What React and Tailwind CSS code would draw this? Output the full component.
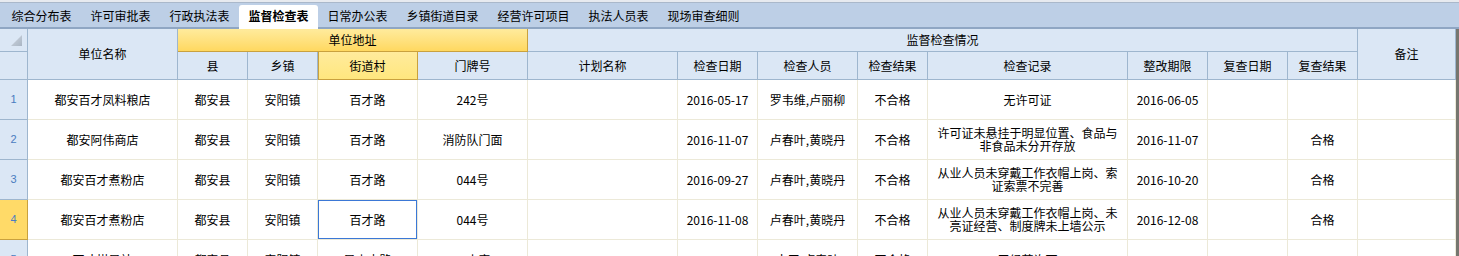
import React from 'react';

const tabs = ['综合分布表', '许可审批表', '行政执法表', '监督检查表', '日常办公表', '乡镇街道目录', '经营许可项目', '执法人员表', '现场审查细则'];

const rows = [
  { n: 1, name: '都安百才凤料粮店', county: '都安县', town: '安阳镇', street: '百才路', no: '242号', plan: '', date: '2016-05-17', staff: '罗韦维,卢丽柳', result: '不合格', record: '无许可证', deadline: '2016-06-05', reDate: '', reResult: '' },
  { n: 2, name: '都安阿伟商店', county: '都安县', town: '安阳镇', street: '百才路', no: '消防队门面', plan: '', date: '2016-11-07', staff: '卢春叶,黄晓丹', result: '不合格', record: '许可证未悬挂于明显位置、食品与非食品未分开存放', deadline: '2016-11-07', reDate: '', reResult: '合格' },
  { n: 3, name: '都安百才煮粉店', county: '都安县', town: '安阳镇', street: '百才路', no: '044号', plan: '', date: '2016-09-27', staff: '卢春叶,黄晓丹', result: '不合格', record: '从业人员未穿戴工作衣帽上岗、索证索票不完善', deadline: '2016-10-20', reDate: '', reResult: '合格' },
  { n: 4, name: '都安百才煮粉店', county: '都安县', town: '安阳镇', street: '百才路', no: '044号', plan: '', date: '2016-11-08', staff: '卢春叶,黄晓丹', result: '不合格', record: '从业人员未穿戴工作衣帽上岗、未亮证经营、制度牌未上墙公示', deadline: '2016-12-08', reDate: '', reResult: '合格' },
  { n: 5, name: '百才棋局站', county: '都安县', town: '安阳镇', street: '凤山中路', no: '二小旁', plan: '', date: '2016-10-18', staff: '韦平,卢春叶', result: '不合格', record: '无经营许可', deadline: '2016-11-18', reDate: '', reResult: '' },
];

const fields = ['name', 'county', 'town', 'street', 'no', 'plan', 'date', 'staff', 'result', 'record', 'deadline', 'reDate', 'reResult', 'remark'];

const head = 'flex items-center justify-center bg-[#dbe7f5] border-r border-b border-[#9eb6ce] text-[12px] text-black';
const yellow = 'flex items-center justify-center bg-linear-to-b from-[#ffeb9c] to-[#ffd85f] border-r border-b border-[#c9a13e] text-[12px] text-black';
const cell = 'flex items-center justify-center bg-white border-r border-b border-[#ece9d8] text-[12px] leading-[13px] text-center text-black pb-[1px]';

const App = () => {
  return (
    <div className="w-[1459px] h-[256px] overflow-hidden bg-white font-['Noto_Sans_CJK_SC',sans-serif]">
      {/* Tab strip */}
      <div className="h-[2px] bg-[#e7eaef]" />
      <div className="flex h-[27px] items-stretch border-t border-[#aab8ca] border-b-2 border-b-[#8fa6c3] bg-[#bdcfe6] pl-[2px]">
        {tabs.map((t) => {
          const active = t === '监督检查表';
          const w = t.length > 5 ? 'w-[91px]' : 'w-[79px]';
          return active ? (
            <div key={t} className={`${w} relative z-10 mt-[2px] mb-[-2px] flex items-center justify-center rounded-t-[3px] bg-white pb-[2px] text-[12px] font-bold text-black`}>
              {t}
            </div>
          ) : (
            <div key={t} className={`${w} flex items-center justify-center pt-[1px] text-[12px] text-black`}>
              {t}
            </div>
          );
        })}
      </div>

      {/* Grid */}
      <div className="grid grid-cols-[28px_150px_70px_70px_100px_110px_150px_80px_100px_70px_200px_80px_80px_70px_98px] grid-rows-[23px_28px_40px_40px_40px_40px_40px] w-[1459px] border-r-[3px] border-r-[#76766f]">
        {/* header row 1 */}
        <div className={`${head} items-end justify-end pr-[5px] pb-[5px]`}>
          <svg width="11" height="11" viewBox="0 0 11 11">
            <defs>
              <linearGradient id="tri" x1="0" y1="0" x2="1" y2="1">
                <stop offset="0" stopColor="#d0d8e2" />
                <stop offset="1" stopColor="#a9b5c3" />
              </linearGradient>
            </defs>
            <polygon points="11,0 11,11 0,11" fill="url(#tri)" />
          </svg>
        </div>
        <div className={`${head} row-span-2`}>单位名称</div>
        <div className={`${yellow} col-span-4`}>单位地址</div>
        <div className={`${head} col-span-8`}>监督检查情况</div>
        <div className={`${head} row-span-2`}>备注</div>

        {/* header row 2 */}
        <div className={head} />
        <div className={head}>县</div>
        <div className={head}>乡镇</div>
        <div className={`${yellow} bg-linear-to-b from-[#ffd45a] to-[#ffe77e] shadow-[inset_1px_0_0_#c9a13e]`}>街道村</div>
        <div className={head}>门牌号</div>
        <div className={head}>计划名称</div>
        <div className={head}>检查日期</div>
        <div className={head}>检查人员</div>
        <div className={head}>检查结果</div>
        <div className={head}>检查记录</div>
        <div className={head}>整改期限</div>
        <div className={head}>复查日期</div>
        <div className={head}>复查结果</div>

        {/* data rows */}
        {rows.map((r) => (
          <React.Fragment key={r.n}>
            <div
              className={`flex items-center justify-center border-r border-b font-['Liberation_Sans',sans-serif] text-[11px] text-[#4a7cc0] ${
                r.n === 4 ? 'bg-[#ffda68] border-[#c9a13e]' : 'bg-[#dbe7f5] border-[#9eb6ce]'
              }`}
            >
              {r.n}
            </div>
            {fields.map((f) => (
              <div
                key={f}
                className={`${cell} ${f === 'record' ? 'px-[9px]' : 'whitespace-nowrap px-[2px]'} ${
                  r.n === 4 && f === 'street' ? 'shadow-[inset_0_0_0_1px_#3b78d6]' : ''
                }`}
              >
                {r[f] || ''}
              </div>
            ))}
          </React.Fragment>
        ))}
      </div>
    </div>
  );
};

export default App;
